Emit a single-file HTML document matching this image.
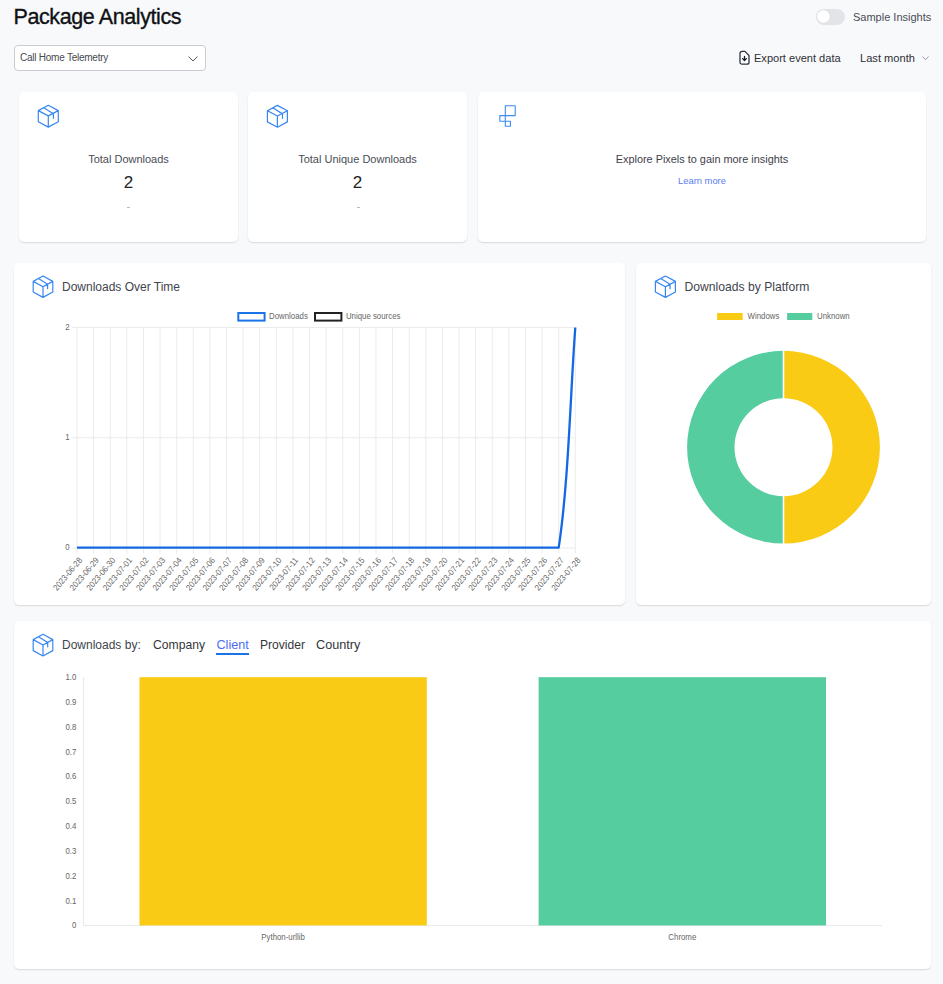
<!DOCTYPE html>
<html>
<head>
<meta charset="utf-8">
<style>
html,body{margin:0;padding:0;}
body{width:943px;height:984px;overflow:hidden;background:#f8f9fb;font-family:"Liberation Sans",sans-serif;color:#333;position:relative;}
.abs{position:absolute;white-space:nowrap;}
.card{position:absolute;background:#fff;border-radius:5px;box-shadow:0 1px 1.5px rgba(0,0,0,0.13);}
.t{position:absolute;white-space:nowrap;line-height:1;}
svg{position:absolute;overflow:visible;}
</style>
</head>
<body>
<!-- Header -->
<div class="t" style="left:13.5px;top:7.2px;font-size:21.5px;letter-spacing:-0.4px;-webkit-text-stroke:0.35px #0f1115;color:#0f1115;">Package Analytics</div>

<!-- toggle -->
<div class="abs" style="left:816px;top:9px;width:29px;height:15.5px;border-radius:8px;background:#e3e4e8;"></div>
<div class="abs" style="left:816.6px;top:9.9px;width:13.6px;height:13.6px;border-radius:50%;background:#fff;box-shadow:0 0 1px rgba(0,0,0,.15);"></div>
<div class="t" style="left:853px;top:12px;font-size:11px;color:#4a4d56;">Sample Insights</div>

<!-- dropdown -->
<div class="abs" style="left:14px;top:45px;width:190px;height:24px;border:1px solid #c9cbd0;border-radius:4px;background:#fff;"></div>
<div class="t" style="left:20px;top:53.1px;font-size:10px;letter-spacing:-0.24px;color:#474950;">Call Home Telemetry</div>
<svg style="left:188px;top:55.5px" width="10" height="6" viewBox="0 0 10 6"><path d="M0.5 0.5 L5 5 L9.5 0.5" fill="none" stroke="#555" stroke-width="1"/></svg>

<!-- export -->
<svg style="left:739px;top:50px" width="12" height="15" viewBox="0 0 12 15"><path d="M3 1.4 H5.9 L10 5.5 V12.2 A2 2 0 0 1 8 14.2 H3 A2 2 0 0 1 1 12.2 V3.4 A2 2 0 0 1 3 1.4 Z" fill="#fff" stroke="#2f3440" stroke-width="1.3" stroke-linejoin="round"/><path d="M5.5 6.4 V10.4 M3.6 8.6 L5.5 10.5 L7.4 8.6" fill="none" stroke="#111827" stroke-width="1.3" stroke-linecap="round" stroke-linejoin="round"/></svg>
<div class="t" style="left:754px;top:52.8px;font-size:11.05px;color:#2e3038;">Export event data</div>
<div class="t" style="left:860px;top:52.8px;font-size:11.1px;color:#2e3038;">Last month</div>
<svg style="left:922px;top:56px" width="7" height="5" viewBox="0 0 7 5"><path d="M0.5 0.5 L3.5 3.8 L6.5 0.5" fill="none" stroke="#9a9ca3" stroke-width="1"/></svg>

<!-- cards -->
<div class="card" style="left:19px;top:92px;width:219px;height:150px;"></div>
<div class="card" style="left:248px;top:92px;width:219px;height:150px;"></div>
<div class="card" style="left:478px;top:92px;width:448px;height:150px;"></div>
<div class="card" style="left:14px;top:263px;width:611px;height:342px;"></div>
<div class="card" style="left:636px;top:263px;width:295px;height:342px;"></div>
<div class="card" style="left:14px;top:621px;width:917px;height:348px;"></div>

<div class="t" style="left:0;width:257px;text-align:center;top:153.5px;font-size:11px;color:#4a4d56;">Total Downloads</div>
<div class="t" style="left:0;width:257px;text-align:center;top:174px;font-size:17px;color:#222;">2</div>
<div class="abs" style="left:127px;top:207px;width:3px;height:1px;background:#b9bbc0;"></div>
<div class="t" style="left:229px;width:257px;text-align:center;top:153.5px;font-size:11px;color:#4a4d56;">Total Unique Downloads</div>
<div class="t" style="left:229px;width:257px;text-align:center;top:174px;font-size:17px;color:#222;">2</div>
<div class="abs" style="left:356.5px;top:207px;width:3px;height:1px;background:#b9bbc0;"></div>
<div class="t" style="left:478px;width:448px;text-align:center;top:153.5px;font-size:10.9px;color:#3e4048;">Explore Pixels to gain more insights</div>
<div class="t" style="left:478px;width:448px;text-align:center;top:175.6px;font-size:9.4px;color:#5b7bf0;">Learn more</div>

<div class="t" style="left:62px;top:280.5px;font-size:12px;color:#41444d;">Downloads Over Time</div>
<div class="t" style="left:684.5px;top:280.5px;font-size:12.15px;color:#41444d;">Downloads by Platform</div>
<div class="t" style="left:62px;top:638.5px;font-size:12px;color:#41444d;">Downloads by:</div>
<div class="t" style="left:153px;top:638.5px;font-size:12.15px;color:#33353b;">Company</div>
<div class="t" style="left:216.5px;top:638.5px;font-size:12.6px;color:#4c6ef5;">Client</div>
<div class="abs" style="left:216px;top:653px;width:33px;height:2px;background:#1a73e8;"></div>
<div class="t" style="left:260px;top:638.5px;font-size:12.1px;color:#33353b;">Provider</div>
<div class="t" style="left:316px;top:638.5px;font-size:12.7px;color:#33353b;">Country</div>

<svg style="position:absolute;left:0;top:0" width="943" height="984" viewBox="0 0 943 984" font-family="Liberation Sans, sans-serif"><path d="M48.30 105.30 L58.30 110.60 V121.80 L48.30 127.10 L38.30 121.80 V110.60 Z M38.30 110.60 L48.30 115.90 L58.30 110.60 M48.30 115.90 V127.10 M43.70 107.74 L53.40 113.78 V118.18" fill="none" stroke="#3787f3" stroke-width="1.2" stroke-linejoin="round" stroke-linecap="round"/>
<path d="M277.40 105.40 L287.40 110.70 V121.90 L277.40 127.20 L267.40 121.90 V110.70 Z M267.40 110.70 L277.40 116.00 L287.40 110.70 M277.40 116.00 V127.20 M272.80 107.84 L282.50 113.88 V118.28" fill="none" stroke="#3787f3" stroke-width="1.2" stroke-linejoin="round" stroke-linecap="round"/>
<path d="M43.00 276.00 L52.80 281.40 V292.00 L43.00 297.40 L33.20 292.00 V281.40 Z M33.20 281.40 L43.00 286.80 L52.80 281.40 M43.00 286.80 V297.40 M38.49 278.48 L47.61 284.26 V288.66" fill="none" stroke="#3787f3" stroke-width="1.2" stroke-linejoin="round" stroke-linecap="round"/>
<path d="M665.40 276.00 L675.40 281.40 V292.00 L665.40 297.40 L655.40 292.00 V281.40 Z M655.40 281.40 L665.40 286.80 L675.40 281.40 M665.40 286.80 V297.40 M660.80 278.48 L670.00 284.26 V288.66" fill="none" stroke="#3787f3" stroke-width="1.2" stroke-linejoin="round" stroke-linecap="round"/>
<path d="M43.00 634.20 L52.80 639.60 V650.60 L43.00 656.00 L33.20 650.60 V639.60 Z M33.20 639.60 L43.00 645.00 L52.80 639.60 M43.00 645.00 V656.00 M38.49 636.68 L47.70 642.46 V646.86" fill="none" stroke="#3787f3" stroke-width="1.2" stroke-linejoin="round" stroke-linecap="round"/>
<path d="M505.3 105.7 H515.2 V115.6 H499.8 V121.3 H510.4 V126.3 H505.3 Z" fill="none" stroke="#3d8bf2" stroke-width="1.1" stroke-linejoin="round"/>
<line x1="77.00" y1="327.5" x2="77.00" y2="553.5" stroke="#ebebeb" stroke-width="1"/>
<line x1="93.61" y1="327.5" x2="93.61" y2="553.5" stroke="#ebebeb" stroke-width="1"/>
<line x1="110.22" y1="327.5" x2="110.22" y2="553.5" stroke="#ebebeb" stroke-width="1"/>
<line x1="126.83" y1="327.5" x2="126.83" y2="553.5" stroke="#ebebeb" stroke-width="1"/>
<line x1="143.44" y1="327.5" x2="143.44" y2="553.5" stroke="#ebebeb" stroke-width="1"/>
<line x1="160.05" y1="327.5" x2="160.05" y2="553.5" stroke="#ebebeb" stroke-width="1"/>
<line x1="176.66" y1="327.5" x2="176.66" y2="553.5" stroke="#ebebeb" stroke-width="1"/>
<line x1="193.27" y1="327.5" x2="193.27" y2="553.5" stroke="#ebebeb" stroke-width="1"/>
<line x1="209.88" y1="327.5" x2="209.88" y2="553.5" stroke="#ebebeb" stroke-width="1"/>
<line x1="226.49" y1="327.5" x2="226.49" y2="553.5" stroke="#ebebeb" stroke-width="1"/>
<line x1="243.10" y1="327.5" x2="243.10" y2="553.5" stroke="#ebebeb" stroke-width="1"/>
<line x1="259.71" y1="327.5" x2="259.71" y2="553.5" stroke="#ebebeb" stroke-width="1"/>
<line x1="276.32" y1="327.5" x2="276.32" y2="553.5" stroke="#ebebeb" stroke-width="1"/>
<line x1="292.93" y1="327.5" x2="292.93" y2="553.5" stroke="#ebebeb" stroke-width="1"/>
<line x1="309.54" y1="327.5" x2="309.54" y2="553.5" stroke="#ebebeb" stroke-width="1"/>
<line x1="326.15" y1="327.5" x2="326.15" y2="553.5" stroke="#ebebeb" stroke-width="1"/>
<line x1="342.76" y1="327.5" x2="342.76" y2="553.5" stroke="#ebebeb" stroke-width="1"/>
<line x1="359.37" y1="327.5" x2="359.37" y2="553.5" stroke="#ebebeb" stroke-width="1"/>
<line x1="375.98" y1="327.5" x2="375.98" y2="553.5" stroke="#ebebeb" stroke-width="1"/>
<line x1="392.59" y1="327.5" x2="392.59" y2="553.5" stroke="#ebebeb" stroke-width="1"/>
<line x1="409.20" y1="327.5" x2="409.20" y2="553.5" stroke="#ebebeb" stroke-width="1"/>
<line x1="425.81" y1="327.5" x2="425.81" y2="553.5" stroke="#ebebeb" stroke-width="1"/>
<line x1="442.42" y1="327.5" x2="442.42" y2="553.5" stroke="#ebebeb" stroke-width="1"/>
<line x1="459.03" y1="327.5" x2="459.03" y2="553.5" stroke="#ebebeb" stroke-width="1"/>
<line x1="475.64" y1="327.5" x2="475.64" y2="553.5" stroke="#ebebeb" stroke-width="1"/>
<line x1="492.25" y1="327.5" x2="492.25" y2="553.5" stroke="#ebebeb" stroke-width="1"/>
<line x1="508.86" y1="327.5" x2="508.86" y2="553.5" stroke="#ebebeb" stroke-width="1"/>
<line x1="525.47" y1="327.5" x2="525.47" y2="553.5" stroke="#ebebeb" stroke-width="1"/>
<line x1="542.08" y1="327.5" x2="542.08" y2="553.5" stroke="#ebebeb" stroke-width="1"/>
<line x1="558.69" y1="327.5" x2="558.69" y2="553.5" stroke="#ebebeb" stroke-width="1"/>
<line x1="575.30" y1="327.5" x2="575.30" y2="553.5" stroke="#ebebeb" stroke-width="1"/>
<line x1="72" y1="548.00" x2="575.3" y2="548.00" stroke="#ebebeb" stroke-width="1"/>
<text transform="translate(69.50,550.20) scale(0.925,1)" text-anchor="end" font-size="8.5" fill="#666" >0</text>
<line x1="72" y1="437.75" x2="575.3" y2="437.75" stroke="#ebebeb" stroke-width="1"/>
<text transform="translate(69.50,439.95) scale(0.925,1)" text-anchor="end" font-size="8.5" fill="#666" >1</text>
<line x1="72" y1="327.50" x2="575.3" y2="327.50" stroke="#ebebeb" stroke-width="1"/>
<text transform="translate(69.50,329.70) scale(0.925,1)" text-anchor="end" font-size="8.5" fill="#666" >2</text>
<text transform="translate(81.00,559.00) rotate(-50) scale(0.925,1)" text-anchor="end" font-size="8.5" fill="#666" dominant-baseline="middle">2023-06-28</text>
<text transform="translate(97.61,559.00) rotate(-50) scale(0.925,1)" text-anchor="end" font-size="8.5" fill="#666" dominant-baseline="middle">2023-06-29</text>
<text transform="translate(114.22,559.00) rotate(-50) scale(0.925,1)" text-anchor="end" font-size="8.5" fill="#666" dominant-baseline="middle">2023-06-30</text>
<text transform="translate(130.83,559.00) rotate(-50) scale(0.925,1)" text-anchor="end" font-size="8.5" fill="#666" dominant-baseline="middle">2023-07-01</text>
<text transform="translate(147.44,559.00) rotate(-50) scale(0.925,1)" text-anchor="end" font-size="8.5" fill="#666" dominant-baseline="middle">2023-07-02</text>
<text transform="translate(164.05,559.00) rotate(-50) scale(0.925,1)" text-anchor="end" font-size="8.5" fill="#666" dominant-baseline="middle">2023-07-03</text>
<text transform="translate(180.66,559.00) rotate(-50) scale(0.925,1)" text-anchor="end" font-size="8.5" fill="#666" dominant-baseline="middle">2023-07-04</text>
<text transform="translate(197.27,559.00) rotate(-50) scale(0.925,1)" text-anchor="end" font-size="8.5" fill="#666" dominant-baseline="middle">2023-07-05</text>
<text transform="translate(213.88,559.00) rotate(-50) scale(0.925,1)" text-anchor="end" font-size="8.5" fill="#666" dominant-baseline="middle">2023-07-06</text>
<text transform="translate(230.49,559.00) rotate(-50) scale(0.925,1)" text-anchor="end" font-size="8.5" fill="#666" dominant-baseline="middle">2023-07-07</text>
<text transform="translate(247.10,559.00) rotate(-50) scale(0.925,1)" text-anchor="end" font-size="8.5" fill="#666" dominant-baseline="middle">2023-07-08</text>
<text transform="translate(263.71,559.00) rotate(-50) scale(0.925,1)" text-anchor="end" font-size="8.5" fill="#666" dominant-baseline="middle">2023-07-09</text>
<text transform="translate(280.32,559.00) rotate(-50) scale(0.925,1)" text-anchor="end" font-size="8.5" fill="#666" dominant-baseline="middle">2023-07-10</text>
<text transform="translate(296.93,559.00) rotate(-50) scale(0.925,1)" text-anchor="end" font-size="8.5" fill="#666" dominant-baseline="middle">2023-07-11</text>
<text transform="translate(313.54,559.00) rotate(-50) scale(0.925,1)" text-anchor="end" font-size="8.5" fill="#666" dominant-baseline="middle">2023-07-12</text>
<text transform="translate(330.15,559.00) rotate(-50) scale(0.925,1)" text-anchor="end" font-size="8.5" fill="#666" dominant-baseline="middle">2023-07-13</text>
<text transform="translate(346.76,559.00) rotate(-50) scale(0.925,1)" text-anchor="end" font-size="8.5" fill="#666" dominant-baseline="middle">2023-07-14</text>
<text transform="translate(363.37,559.00) rotate(-50) scale(0.925,1)" text-anchor="end" font-size="8.5" fill="#666" dominant-baseline="middle">2023-07-15</text>
<text transform="translate(379.98,559.00) rotate(-50) scale(0.925,1)" text-anchor="end" font-size="8.5" fill="#666" dominant-baseline="middle">2023-07-16</text>
<text transform="translate(396.59,559.00) rotate(-50) scale(0.925,1)" text-anchor="end" font-size="8.5" fill="#666" dominant-baseline="middle">2023-07-17</text>
<text transform="translate(413.20,559.00) rotate(-50) scale(0.925,1)" text-anchor="end" font-size="8.5" fill="#666" dominant-baseline="middle">2023-07-18</text>
<text transform="translate(429.81,559.00) rotate(-50) scale(0.925,1)" text-anchor="end" font-size="8.5" fill="#666" dominant-baseline="middle">2023-07-19</text>
<text transform="translate(446.42,559.00) rotate(-50) scale(0.925,1)" text-anchor="end" font-size="8.5" fill="#666" dominant-baseline="middle">2023-07-20</text>
<text transform="translate(463.03,559.00) rotate(-50) scale(0.925,1)" text-anchor="end" font-size="8.5" fill="#666" dominant-baseline="middle">2023-07-21</text>
<text transform="translate(479.64,559.00) rotate(-50) scale(0.925,1)" text-anchor="end" font-size="8.5" fill="#666" dominant-baseline="middle">2023-07-22</text>
<text transform="translate(496.25,559.00) rotate(-50) scale(0.925,1)" text-anchor="end" font-size="8.5" fill="#666" dominant-baseline="middle">2023-07-23</text>
<text transform="translate(512.86,559.00) rotate(-50) scale(0.925,1)" text-anchor="end" font-size="8.5" fill="#666" dominant-baseline="middle">2023-07-24</text>
<text transform="translate(529.47,559.00) rotate(-50) scale(0.925,1)" text-anchor="end" font-size="8.5" fill="#666" dominant-baseline="middle">2023-07-25</text>
<text transform="translate(546.08,559.00) rotate(-50) scale(0.925,1)" text-anchor="end" font-size="8.5" fill="#666" dominant-baseline="middle">2023-07-26</text>
<text transform="translate(562.69,559.00) rotate(-50) scale(0.925,1)" text-anchor="end" font-size="8.5" fill="#666" dominant-baseline="middle">2023-07-27</text>
<text transform="translate(579.30,559.00) rotate(-50) scale(0.925,1)" text-anchor="end" font-size="8.5" fill="#666" dominant-baseline="middle">2023-07-28</text>
<path d="M77.0 547.7 L558.69 547.7 C568.66 481.85 570.32 393.65 575.30 327.5" fill="none" stroke="#1468e3" stroke-width="2.3" stroke-linejoin="round"/>
<rect x="238.3" y="313.0" width="26.3" height="7.6" fill="none" stroke="#1a73e8" stroke-width="2"/>
<text transform="translate(269.00,318.70) scale(0.925,1)" text-anchor="start" font-size="8.5" fill="#666" >Downloads</text>
<rect x="315" y="313.0" width="26.4" height="7.6" fill="none" stroke="#222" stroke-width="2"/>
<text transform="translate(345.90,318.70) scale(0.925,1)" text-anchor="start" font-size="8.5" fill="#666" >Unique sources</text>
<path d="M783.5 350.79999999999995 A96.4 96.4 0 0 1 783.5 543.6 L783.5 496.2 A49.0 49.0 0 0 0 783.5 398.2 Z" fill="#facb15"/>
<path d="M783.5 543.6 A96.4 96.4 0 0 1 783.5 350.79999999999995 L783.5 398.2 A49.0 49.0 0 0 0 783.5 496.2 Z" fill="#55cd9f"/>
<line x1="783.5" y1="349.79999999999995" x2="783.5" y2="544.6" stroke="#fff" stroke-width="1.6"/>
<rect x="717.1" y="313" width="25.6" height="7" fill="#facb15"/>
<text transform="translate(747.50,318.70) scale(0.925,1)" text-anchor="start" font-size="8.5" fill="#666" >Windows</text>
<rect x="787.1" y="313" width="25.2" height="7" fill="#55cd9f"/>
<text transform="translate(817.00,318.70) scale(0.925,1)" text-anchor="start" font-size="8.5" fill="#666" >Unknown</text>
<line x1="83.4" y1="677.2" x2="83.4" y2="925.4" stroke="#e8e8e8" stroke-width="1"/>
<line x1="83.4" y1="925.4" x2="881.9" y2="925.4" stroke="#e8e8e8" stroke-width="1"/>
<text transform="translate(76.30,928.40) scale(0.925,1)" text-anchor="end" font-size="8.5" fill="#666" >0</text>
<text transform="translate(76.30,903.58) scale(0.925,1)" text-anchor="end" font-size="8.5" fill="#666" >0.1</text>
<text transform="translate(76.30,878.76) scale(0.925,1)" text-anchor="end" font-size="8.5" fill="#666" >0.2</text>
<text transform="translate(76.30,853.94) scale(0.925,1)" text-anchor="end" font-size="8.5" fill="#666" >0.3</text>
<text transform="translate(76.30,829.12) scale(0.925,1)" text-anchor="end" font-size="8.5" fill="#666" >0.4</text>
<text transform="translate(76.30,804.30) scale(0.925,1)" text-anchor="end" font-size="8.5" fill="#666" >0.5</text>
<text transform="translate(76.30,779.48) scale(0.925,1)" text-anchor="end" font-size="8.5" fill="#666" >0.6</text>
<text transform="translate(76.30,754.66) scale(0.925,1)" text-anchor="end" font-size="8.5" fill="#666" >0.7</text>
<text transform="translate(76.30,729.84) scale(0.925,1)" text-anchor="end" font-size="8.5" fill="#666" >0.8</text>
<text transform="translate(76.30,705.02) scale(0.925,1)" text-anchor="end" font-size="8.5" fill="#666" >0.9</text>
<text transform="translate(76.30,680.20) scale(0.925,1)" text-anchor="end" font-size="8.5" fill="#666" >1.0</text>
<rect x="139.5" y="677.2" width="287.3" height="248.19999999999993" fill="#facb15"/>
<rect x="538.6" y="677.2" width="287.4" height="248.19999999999993" fill="#55cd9f"/>
<text transform="translate(283.10,939.80) scale(0.925,1)" text-anchor="middle" font-size="8.5" fill="#666" >Python-urllib</text>
<text transform="translate(682.30,939.80) scale(0.925,1)" text-anchor="middle" font-size="8.5" fill="#666" >Chrome</text></svg>
</body>
</html>
